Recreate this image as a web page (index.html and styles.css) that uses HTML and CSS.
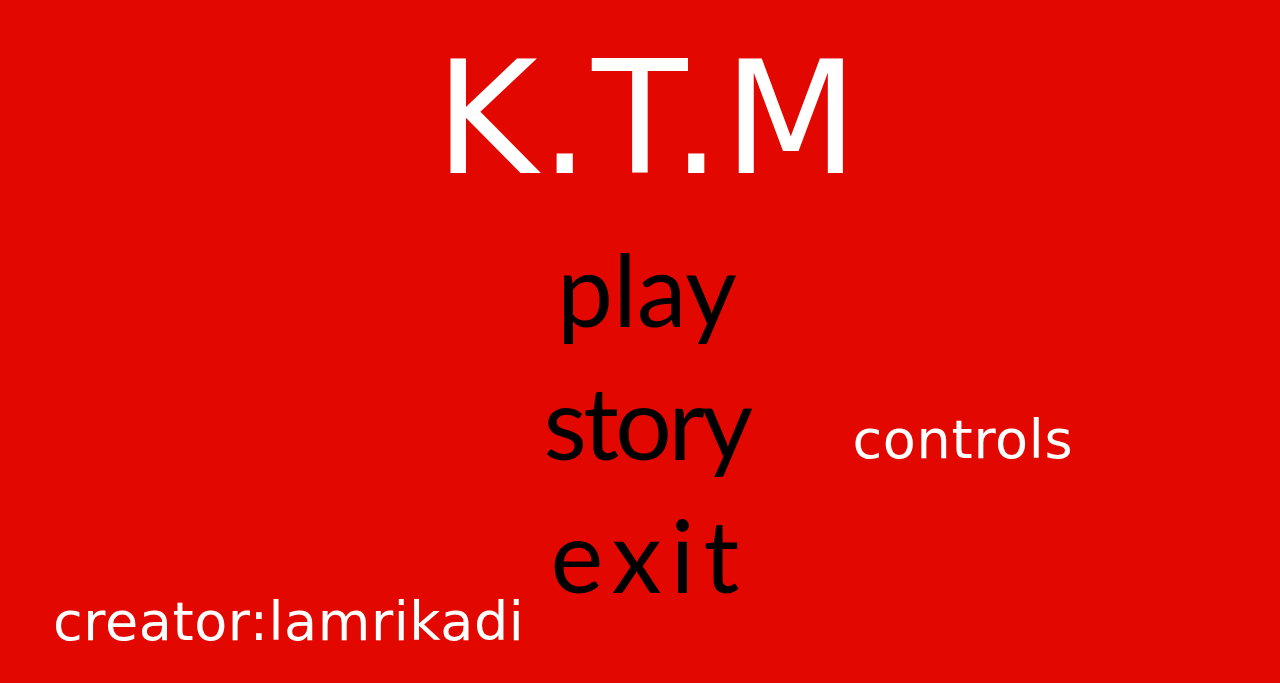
FILE: index.html
```html
<!DOCTYPE html>
<html lang="en">
<head>
<meta charset="utf-8">
<title>K.T.M</title>
<link rel="stylesheet" href="styles.css">
</head>
<body>
<main class="screen">
  <h1 class="title">K.T.M</h1>
  <div class="menu-grid">
    <div class="menu-item menu-play">play</div>
    <div class="menu-item menu-story">story</div>
    <div class="menu-item menu-exit">exit</div>
    <div class="controls">controls</div>
    <div class="creator">creator:lamrikadi</div>
  </div>
</main>
</body>
</html>
```

FILE: styles.css
```css
html, body {
  margin: 0;
  padding: 0;
  background: #e20800;
}

.screen {
  width: 1280px;
  height: 683px;
  box-sizing: border-box;
  padding-top: 41px;
  padding-bottom: 30px;
  display: flex;
  flex-direction: column;
  background: #e20800;
  overflow: hidden;
}

.title {
  margin: 0;
  padding-left: 16px;
  text-align: center;
  font-family: "DejaVu Sans", sans-serif;
  font-weight: normal;
  font-size: 156px;
  line-height: 1;
  letter-spacing: 2.5px;
  color: #ffffff;
}

.menu-grid {
  flex: 1;
  margin-top: 25px;
  display: grid;
  grid-template-columns: 1fr 240px 1fr;
  grid-template-rows: 133px 133px 133px 1fr;
}

.menu-item {
  grid-column: 2;
  text-align: center;
  font-family: Lato, "Open Sans", sans-serif;
  font-size: 100px;
  line-height: 133px;
  color: #000000;
  white-space: nowrap;
}

.menu-play { grid-row: 1; padding-left: 5px; }
.menu-story { grid-row: 2; letter-spacing: -3.5px; padding-left: 4px; }
.menu-exit { grid-row: 3; letter-spacing: 9px; padding-left: 10px; }

.controls {
  grid-column: 3;
  grid-row: 2;
  align-self: start;
  justify-self: start;
  margin-top: 53px;
  margin-left: 88px;
  font-family: "DejaVu Sans", sans-serif;
  font-size: 54px;
  letter-spacing: 0.7px;
  color: #ffffff;
  white-space: nowrap;
}

.creator {
  grid-column: 1;
  grid-row: 3 / 5;
  align-self: end;
  justify-self: start;
  margin-left: 53px;
  font-family: "DejaVu Sans", sans-serif;
  font-size: 54px;
  letter-spacing: 0.6px;
  color: #ffffff;
  white-space: nowrap;
}
```
